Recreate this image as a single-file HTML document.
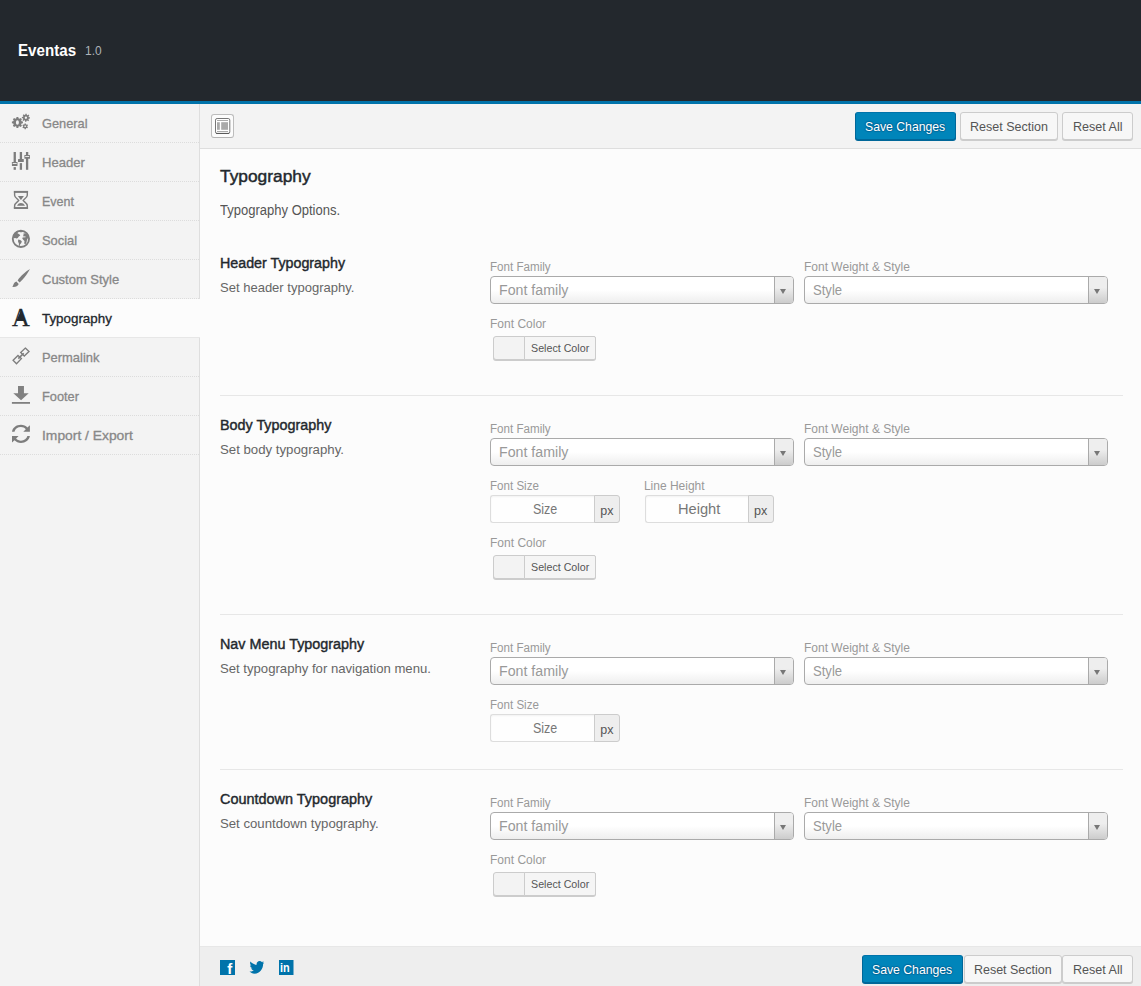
<!DOCTYPE html>
<html lang="en">
<head>
<meta charset="utf-8">
<title>Eventas Options</title>
<style>
*{box-sizing:border-box;margin:0;padding:0}
html,body{width:1141px;height:986px;overflow:hidden;background:#fcfcfc;font-family:"Liberation Sans",Arial,sans-serif;font-size:13px;color:#444}
.t,.ti{position:absolute;white-space:nowrap;line-height:1;display:block;transform-origin:0 0}
#hdr{position:absolute;left:0;top:0;width:1141px;height:104px;background:#23282d;border-bottom:3px solid #0073aa}
#side{position:absolute;left:0;top:104px;width:200px;height:882px;background:#f3f3f3;border-right:1px solid #dedede}
.mi{position:absolute;left:0;width:199px;height:39px}
.mi:after{content:"";position:absolute;left:0;bottom:0;width:199px;height:1px;background:repeating-linear-gradient(to right,#dcdcdc 0,#dcdcdc 1px,transparent 1px,transparent 2px)}
.mi.act{background:#fcfcfc;width:200px}
.mi.act:after{width:200px;background:#e7e7e7}
#bar{position:absolute;left:200px;top:104px;width:941px;height:45px;background:#f3f3f3;border-bottom:1px solid #dedede}
#foot{position:absolute;left:200px;top:946px;width:941px;height:40px;background:#eee;border-top:1px solid #e7e7e7}
.btn{position:absolute;height:28px;border:1px solid #ccc;border-radius:3px;background:#f7f7f7;box-shadow:0 1px 0 #ccc}
.btn.pri{background:#0085ba;border-color:#0073aa #006799 #006799;box-shadow:0 1px 0 #006799}
.hr{position:absolute;left:220px;width:903px;height:1px;background:#e7e7e7}
.sel{position:absolute;width:304px;height:28px;border:1px solid #aaa;border-radius:4px;background:linear-gradient(to top,#eee 0%,#fff 50%)}
.sel i{position:absolute;right:0;top:0;width:19px;height:26px;border-left:1px solid #aaa;border-radius:0 3px 3px 0;background:linear-gradient(to top,#ccc 0%,#eee 60%)}
.sel i:after{content:"";position:absolute;left:5px;top:11.5px;border-left:3px solid transparent;border-right:3px solid transparent;border-top:5px solid #777}
.inp{position:absolute;width:130px;height:28px}
.inp .in{position:absolute;left:0;top:0;width:105px;height:28px;border:1px solid #ddd;border-right:0;border-radius:3px 0 0 3px;background:#fefefe;box-shadow:inset 0 1px 2px rgba(0,0,0,.05)}
.inp .ad{position:absolute;left:104px;top:0;width:26px;height:28px;border:1px solid #ccc;border-radius:0 3px 3px 0;background:#eee}
.cp{position:absolute;width:103px;height:24px;border:1px solid #ccc;border-radius:3px;background:#f3f3f3;box-shadow:0 1px 0 #ccc}
.cp b{position:absolute;left:30px;top:-1px;width:72px;height:24px;border:1px solid #ccc;border-radius:0 2px 2px 0;background:#f5f5f5}
.xb{position:absolute;left:211px;top:114px;width:23px;height:24px;border:1px solid #bdbdbd;border-bottom-color:#b4b4b4;border-radius:3px;background:#fcfcfc}

</style>
</head>
<body>
<div id="hdr"></div>
<div id="side"></div>
<div id="bar"></div>
<div id="foot"></div>
<div class="mi" style="top:104px"></div>
<div class="mi" style="top:143px"></div>
<div class="mi" style="top:182px"></div>
<div class="mi" style="top:221px"></div>
<div class="mi" style="top:260px"></div>
<div class="mi act" style="top:299px"></div>
<div class="mi" style="top:338px"></div>
<div class="mi" style="top:377px"></div>
<div class="mi" style="top:416px"></div>
<div class="sel" style="left:490px;top:276px"><i></i></div>
<div class="sel" style="left:804px;top:276px"><i></i></div>
<div class="sel" style="left:490px;top:438px"><i></i></div>
<div class="sel" style="left:804px;top:438px"><i></i></div>
<div class="sel" style="left:490px;top:657px"><i></i></div>
<div class="sel" style="left:804px;top:657px"><i></i></div>
<div class="sel" style="left:490px;top:812px"><i></i></div>
<div class="sel" style="left:804px;top:812px"><i></i></div>
<div class="hr" style="top:395px"></div>
<div class="hr" style="top:614px"></div>
<div class="hr" style="top:769px"></div>
<div class="cp" style="left:493px;top:336px"><b></b></div>
<div class="cp" style="left:493px;top:555px"><b></b></div>
<div class="cp" style="left:493px;top:872px"><b></b></div>
<div class="inp" style="left:490px;top:495px"><div class="in" style="width:105px"></div><div class="ad" style="left:104px"></div></div>
<div class="inp" style="left:645px;top:495px"><div class="in" style="width:104px"></div><div class="ad" style="left:103px"></div></div>
<div class="inp" style="left:490px;top:714px"><div class="in" style="width:105px"></div><div class="ad" style="left:104px"></div></div>
<div class="btn pri" style="left:855px;top:112px;width:101px"></div>
<div class="btn" style="left:960px;top:112px;width:98px"></div>
<div class="btn" style="left:1062px;top:112px;width:71px"></div>
<div class="btn pri" style="left:862px;top:955px;width:101px"></div>
<div class="btn" style="left:964px;top:955px;width:98px"></div>
<div class="btn" style="left:1062px;top:955px;width:71px"></div>
<div class="xb"></div>
<svg style="position:absolute;left:0;top:0" width="1141" height="986" viewBox="0 0 1141 986">
<g fill="#7d7d7d" fill-rule="evenodd">
<path d="M21.56 121.35 L22.92 121.53 L22.92 123.37 L21.56 123.55 L21.12 124.61 L21.96 125.71 L20.66 127.01 L19.56 126.17 L18.50 126.61 L18.32 127.97 L16.48 127.97 L16.30 126.61 L15.24 126.17 L14.14 127.01 L12.84 125.71 L13.68 124.61 L13.24 123.55 L11.88 123.37 L11.88 121.53 L13.24 121.35 L13.68 120.29 L12.84 119.19 L14.14 117.89 L15.24 118.73 L16.30 118.29 L16.48 116.93 L18.32 116.93 L18.50 118.29 L19.56 118.73 L20.66 117.89 L21.96 119.19 L21.12 120.29Z M18.90 122.45 A1.5 2.2 0 1 0 15.90 122.45 A1.5 2.2 0 1 0 18.90 122.45Z"/>
<path d="M28.83 117.13 L29.97 117.28 L29.91 118.62 L28.76 118.66 L28.42 119.38 L29.11 120.30 L28.11 121.20 L27.28 120.42 L26.52 120.68 L26.37 121.82 L25.03 121.76 L24.99 120.61 L24.27 120.27 L23.35 120.96 L22.45 119.96 L23.23 119.13 L22.97 118.37 L21.83 118.22 L21.89 116.88 L23.04 116.84 L23.38 116.12 L22.69 115.20 L23.69 114.30 L24.52 115.08 L25.28 114.82 L25.43 113.68 L26.77 113.74 L26.81 114.89 L27.53 115.23 L28.45 114.54 L29.35 115.54 L28.57 116.37Z M27.05 117.75 A1.15 1.15 0 1 0 24.75 117.75 A1.15 1.15 0 1 0 27.05 117.75Z"/>
<path d="M24.47 124.28 L24.57 123.47 L25.83 123.47 L25.93 124.28 L26.59 124.66 L27.33 124.34 L27.97 125.43 L27.32 125.92 L27.32 126.68 L27.97 127.17 L27.33 128.26 L26.59 127.94 L25.93 128.32 L25.83 129.13 L24.57 129.13 L24.47 128.32 L23.81 127.94 L23.07 128.26 L22.43 127.17 L23.08 126.68 L23.08 125.92 L22.43 125.43 L23.07 124.34 L23.81 124.66Z M26.15 126.30 A0.95 0.7 0 1 0 24.25 126.30 A0.95 0.7 0 1 0 26.15 126.30Z"/>
</g>
<g fill="#7d7d7d">
<rect x="13.6" y="152" width="2.3" height="10.1"/><rect x="13.6" y="167.1" width="2.3" height="2.7"/>
<rect x="19.75" y="152" width="2.3" height="7"/><rect x="19.75" y="163.1" width="2.3" height="6.7"/>
<rect x="25.95" y="152" width="2.3" height="17.8"/>
<rect x="11.9" y="162.1" width="5.6" height="3.8" rx=".5"/><rect x="18" y="159" width="5.8" height="2.9" rx=".5"/><rect x="24.4" y="155.1" width="5.6" height="3.7" rx=".5"/>
<rect x="12.7" y="163" width="4" height=".9" fill="#f3f3f3"/><rect x="25.2" y="156" width="4" height=".9" fill="#f3f3f3"/>
</g>
<g fill="none" stroke="#7d7d7d" stroke-width="1.4" stroke-linejoin="round">
<path d="M14.6 192 L27.3 192 L27.3 195.2 C27.3 197.6 24.2 199 23.1 200.45 C24.2 201.9 27.3 203.3 27.3 205.7 L27.3 208 L14.6 208 L14.6 205.7 C14.6 203.3 17.7 201.9 18.8 200.45 C17.7 199 14.6 197.6 14.6 195.2Z"/>
</g>
<g fill="#7d7d7d"><rect x="13.8" y="190.9" width="14.3" height="1.7"/><rect x="13.8" y="207.2" width="14.3" height="1.7"/>
<path d="M17.9 196.1 L23.9 196.1 L21.2 199.8 L20.6 199.8Z"/><path d="M17 205.7 C18 203.6 19.6 203 20.95 203 C22.3 203 24 203.6 25 205.7Z"/></g>
<circle cx="20.9" cy="238.85" r="8.15" fill="none" stroke="#7d7d7d" stroke-width="1.85"/>
<g fill="#7d7d7d">
<path d="M13.2 236.5 C13.6 233.6 15.4 231.6 17.5 230.9 L18.6 231.6 L17.2 233 L19.6 234.5 L20.3 235.4 L18.8 236.6 L17.8 238 L16.5 238.6 L15.2 237.9 L13.9 238.2Z"/>
<path d="M18.2 239.6 L20.2 239.9 L21.8 241.3 L21.3 243 L20 244.6 L19.4 246.6 L18.9 246.4 L18.9 243.6 L18 241.6Z"/>
<path d="M23.4 233.6 L25.6 233.2 L27.3 234.4 L28.4 236.6 L28.2 238.6 L27.6 238.4 L26.9 240.2 L26.3 243.2 L25.2 244.2 L24.2 243.6 L24.5 241 L23.2 239.8 L22.3 238.6 L22.6 237.4 L25.6 237.2 L25.6 236.4 L22.9 236.2 L23.6 234.9Z"/>
<path d="M18.6 231.2 C20 230.6 21.8 230.6 23.2 231.2 L21 232.4Z"/>
</g>
<g fill="#7d7d7d">
<path d="M29.9 269.1 C28 272.5 24.6 278.4 19.6 282.6 L17.6 280.5 C20.2 276.4 26.2 271.2 29.9 269.1Z"/>
<path d="M16.4 281.5 L18.7 283.9 C17.8 286.2 15.2 287.3 12.2 286.8 C13.6 285.8 13.4 282.4 16.4 281.5Z"/>
</g>
<g fill="none" stroke="#7d7d7d" stroke-width="1.35" stroke-linejoin="miter">
<path d="M25.3 348.1 L29 351.6 L24.25 356 L20.7 352.5Z"/>
<path d="M18 355.4 L21.4 358.6 L16.5 363.8 L13.1 360.25Z"/>
<path d="M18.3 358.6 L23.7 353.2" stroke-width="1.6"/>
</g>
<g fill="#808080">
<path d="M18 386 L23.95 386 L23.95 393.2 L28.7 393.2 L21.05 400.3 L13.3 393.2 L18 393.2Z"/><rect x="11.9" y="402" width="18.1" height="1.8"/>
</g>
<g fill="#7d7d7d">
<path d="M12.0 431.7 C12.6 427.6 16.4 424.8 20.95 424.8 C23.6 424.8 25.8 425.8 27.4 427.4 L29.9 425.2 L29.9 431.7 L23.3 431.7 L25.8 429.2 C24.6 427.9 22.9 427.05 20.95 427.05 C17.7 427.05 15.1 429 14.5 431.7Z"/>
<path d="M12.0 431.7 C12.6 427.6 16.4 424.8 20.95 424.8 C23.6 424.8 25.8 425.8 27.4 427.4 L29.9 425.2 L29.9 431.7 L23.3 431.7 L25.8 429.2 C24.6 427.9 22.9 427.05 20.95 427.05 C17.7 427.05 15.1 429 14.5 431.7Z" transform="rotate(180 20.95 433.85)"/>
</g>
<rect x="215.5" y="118.5" width="14.3" height="15" rx="1.6" fill="#fff" stroke="#777" stroke-width="1"/>
<path d="M216.2 133.4 L229.1 133.4" stroke="#555" stroke-width="1"/>
<g fill="#aaa"><rect x="217" y="120" width="11" height="1"/><rect x="217" y="131" width="11" height="1"/><rect x="217" y="122.2" width="2.8" height="7.6"/><rect x="221.2" y="122.2" width="6.8" height="7.6"/></g>
<rect x="220" y="960" width="15" height="15" fill="#0073aa"/>
<rect x="279" y="960" width="14.5" height="15" fill="#0073aa"/>
<path fill="#0073aa" d="M264.1 962.5 C263.6 962.8 263 962.9 262.4 963 C263 962.6 263.5 962 263.7 961.3 C263.1 961.7 262.5 961.9 261.8 962.1 C261.3 961.5 260.5 961.1 259.6 961.1 C257.9 961.1 256.6 962.5 256.6 964.1 C256.6 964.3 256.6 964.6 256.7 964.8 C254.2 964.7 252 963.5 250.5 961.6 C250.2 962.1 250.1 962.6 250.1 963.1 C250.1 964.2 250.6 965.1 251.4 965.6 C250.9 965.6 250.5 965.5 250.1 965.2 C250.1 966.7 251.1 967.9 252.5 968.2 C252.2 968.3 252 968.3 251.7 968.3 C251.5 968.3 251.3 968.3 251.1 968.2 C251.5 969.4 252.6 970.3 253.9 970.3 C252.9 971.1 251.6 971.6 250.2 971.6 C250 971.6 249.7 971.6 249.5 971.5 C250.8 972.4 252.4 973.7 254.5 973.7 C260.1 973.7 263.1 968.3 263.1 964.3 L263.1 963.9 C263.5 963.5 263.9 963 264.1 962.5Z"/>
</svg>
<span class="ti" style="left:12.1px;top:304.5px;font-family:'Liberation Serif',serif;font-weight:400;font-size:26px;color:#23282d;transform:scaleX(.945);-webkit-text-stroke:.3px #23282d">A</span>
<svg style="position:absolute;left:0;top:300px" width="40" height="36" viewBox="0 300 40 36"><path d="M20.6 311.2 L25.6 320.9 L16.2 320.9Z" fill="#23282d"/></svg>
<span class="ti" style="left:227.2px;top:960.5px;font-weight:700;font-size:15px;color:#fff">f</span>
<span class="ti" style="left:280.4px;top:962.4px;font-weight:700;font-size:12.5px;color:#fff;transform:scaleX(.87)">in</span>
<span class="t" style="left:18.11px;top:42px;font-size:17px;font-weight:700;color:#fff;transform:scaleX(0.8906);">Eventas</span>
<span class="t" style="left:85.28px;top:44px;font-size:13px;color:#aeb3b8;transform:scaleX(0.9176);">1.0</span>
<span class="t" style="left:41.9px;top:117px;font-size:13px;color:#888;transform:scaleX(0.9848);-webkit-text-stroke:0.3px currentColor;">General</span>
<span class="t" style="left:41.5px;top:156px;font-size:13px;color:#888;transform:scaleX(1.0048);-webkit-text-stroke:0.3px currentColor;">Header</span>
<span class="t" style="left:41.54px;top:195px;font-size:13px;color:#888;transform:scaleX(0.9606);-webkit-text-stroke:0.3px currentColor;">Event</span>
<span class="t" style="left:41.91px;top:234px;font-size:13px;color:#888;transform:scaleX(0.9912);-webkit-text-stroke:0.3px currentColor;">Social</span>
<span class="t" style="left:41.9px;top:273px;font-size:13px;color:#888;transform:scaleX(0.9987);-webkit-text-stroke:0.3px currentColor;">Custom Style</span>
<span class="t" style="left:41.8px;top:312px;font-size:13px;color:#23282d;transform:scaleX(1.0279);-webkit-text-stroke:0.3px currentColor;">Typography</span>
<span class="t" style="left:42.31px;top:351px;font-size:13px;color:#888;transform:scaleX(0.993);-webkit-text-stroke:0.3px currentColor;">Permalink</span>
<span class="t" style="left:42.32px;top:390px;font-size:13px;color:#888;transform:scaleX(0.9838);-webkit-text-stroke:0.3px currentColor;">Footer</span>
<span class="t" style="left:42.24px;top:429px;font-size:13px;color:#888;transform:scaleX(1.0647);-webkit-text-stroke:0.3px currentColor;">Import / Export</span>
<span class="t" style="left:220.1px;top:168px;font-size:17px;color:#23282d;transform:scaleX(1.0202);-webkit-text-stroke:0.45px currentColor;">Typography</span>
<span class="t" style="left:220.4px;top:203px;font-size:14px;color:#555;transform:scaleX(0.9297);">Typography Options.</span>
<span class="t" style="left:219.98px;top:256px;font-size:14px;color:#23282d;transform:scaleX(1.0189);-webkit-text-stroke:0.4px currentColor;">Header Typography</span>
<span class="t" style="left:220.2px;top:281px;font-size:13px;color:#666;transform:scaleX(1.0015);">Set header typography.</span>
<span class="t" style="left:489.53px;top:261px;font-size:12px;color:#999;transform:scaleX(0.9677);">Font Family</span>
<span class="t" style="left:804.3px;top:261px;font-size:12px;color:#999;transform:scaleX(1.001);">Font Weight &amp; Style</span>
<span class="t" style="left:498.79px;top:283px;font-size:14px;color:#999;transform:scaleX(1.0134);">Font family</span>
<span class="t" style="left:813.27px;top:283px;font-size:14px;color:#999;transform:scaleX(0.9333);">Style</span>
<span class="t" style="left:219.98px;top:418px;font-size:14px;color:#23282d;transform:scaleX(1.0241);-webkit-text-stroke:0.4px currentColor;">Body Typography</span>
<span class="t" style="left:220.18px;top:443px;font-size:13px;color:#666;transform:scaleX(1.0167);">Set body typography.</span>
<span class="t" style="left:489.53px;top:423px;font-size:12px;color:#999;transform:scaleX(0.9677);">Font Family</span>
<span class="t" style="left:804.3px;top:423px;font-size:12px;color:#999;transform:scaleX(1.001);">Font Weight &amp; Style</span>
<span class="t" style="left:498.79px;top:445px;font-size:14px;color:#999;transform:scaleX(1.0134);">Font family</span>
<span class="t" style="left:813.27px;top:445px;font-size:14px;color:#999;transform:scaleX(0.9333);">Style</span>
<span class="t" style="left:219.97px;top:637px;font-size:14px;color:#23282d;transform:scaleX(1.0257);-webkit-text-stroke:0.4px currentColor;">Nav Menu Typography</span>
<span class="t" style="left:220.19px;top:662px;font-size:13px;color:#666;transform:scaleX(1.0097);">Set typography for navigation menu.</span>
<span class="t" style="left:489.53px;top:642px;font-size:12px;color:#999;transform:scaleX(0.9677);">Font Family</span>
<span class="t" style="left:804.3px;top:642px;font-size:12px;color:#999;transform:scaleX(1.001);">Font Weight &amp; Style</span>
<span class="t" style="left:498.79px;top:664px;font-size:14px;color:#999;transform:scaleX(1.0134);">Font family</span>
<span class="t" style="left:813.27px;top:664px;font-size:14px;color:#999;transform:scaleX(0.9333);">Style</span>
<span class="t" style="left:220.3px;top:792px;font-size:14px;color:#23282d;transform:scaleX(1.0318);-webkit-text-stroke:0.4px currentColor;">Countdown Typography</span>
<span class="t" style="left:220.19px;top:817px;font-size:13px;color:#666;transform:scaleX(1.0135);">Set countdown typography.</span>
<span class="t" style="left:489.53px;top:797px;font-size:12px;color:#999;transform:scaleX(0.9677);">Font Family</span>
<span class="t" style="left:804.3px;top:797px;font-size:12px;color:#999;transform:scaleX(1.001);">Font Weight &amp; Style</span>
<span class="t" style="left:498.79px;top:819px;font-size:14px;color:#999;transform:scaleX(1.0134);">Font family</span>
<span class="t" style="left:813.27px;top:819px;font-size:14px;color:#999;transform:scaleX(0.9333);">Style</span>
<span class="t" style="left:489.5px;top:318px;font-size:12px;color:#999;transform:scaleX(1.0018);">Font Color</span>
<span class="t" style="left:531.03px;top:343px;font-size:11px;color:#555;transform:scaleX(0.9712);">Select Color</span>
<span class="t" style="left:489.5px;top:537px;font-size:12px;color:#999;transform:scaleX(1.0018);">Font Color</span>
<span class="t" style="left:531.03px;top:562px;font-size:11px;color:#555;transform:scaleX(0.9712);">Select Color</span>
<span class="t" style="left:489.5px;top:854px;font-size:12px;color:#999;transform:scaleX(1.0018);">Font Color</span>
<span class="t" style="left:531.03px;top:879px;font-size:11px;color:#555;transform:scaleX(0.9712);">Select Color</span>
<span class="t" style="left:489.63px;top:480px;font-size:12px;color:#999;transform:scaleX(0.9653);">Font Size</span>
<span class="t" style="left:533.11px;top:502px;font-size:14px;color:#777;transform:scaleX(0.8923);">Size</span>
<span class="t" style="left:600.2px;top:505px;font-size:12.5px;color:#555;transform:scaleX(1.0);">px</span>
<span class="t" style="left:489.63px;top:699px;font-size:12px;color:#999;transform:scaleX(0.9653);">Font Size</span>
<span class="t" style="left:533.11px;top:721px;font-size:14px;color:#777;transform:scaleX(0.8923);">Size</span>
<span class="t" style="left:600.2px;top:724px;font-size:12.5px;color:#555;transform:scaleX(1.0);">px</span>
<span class="t" style="left:643.9px;top:480px;font-size:12px;color:#999;transform:scaleX(1.0);">Line Height</span>
<span class="t" style="left:677.95px;top:502px;font-size:14px;color:#777;transform:scaleX(1.0462);">Height</span>
<span class="t" style="left:754.49px;top:505px;font-size:12.5px;color:#555;transform:scaleX(1.0083);">px</span>
<span class="t" style="left:864.66px;top:120px;font-size:13px;color:#fff;transform:scaleX(0.9405);text-shadow:0 -1px 1px #006799,1px 0 1px #006799,0 1px 1px #006799,-1px 0 1px #006799;">Save Changes</span>
<span class="t" style="left:970.14px;top:120px;font-size:13px;color:#555;transform:scaleX(0.962);">Reset Section</span>
<span class="t" style="left:1072.53px;top:120px;font-size:13px;color:#555;transform:scaleX(0.966);">Reset All</span>
<span class="t" style="left:871.66px;top:963px;font-size:13px;color:#fff;transform:scaleX(0.9405);text-shadow:0 -1px 1px #006799,1px 0 1px #006799,0 1px 1px #006799,-1px 0 1px #006799;">Save Changes</span>
<span class="t" style="left:974.24px;top:963px;font-size:13px;color:#555;transform:scaleX(0.9595);">Reset Section</span>
<span class="t" style="left:1072.53px;top:963px;font-size:13px;color:#555;transform:scaleX(0.966);">Reset All</span>
</body>
</html>
